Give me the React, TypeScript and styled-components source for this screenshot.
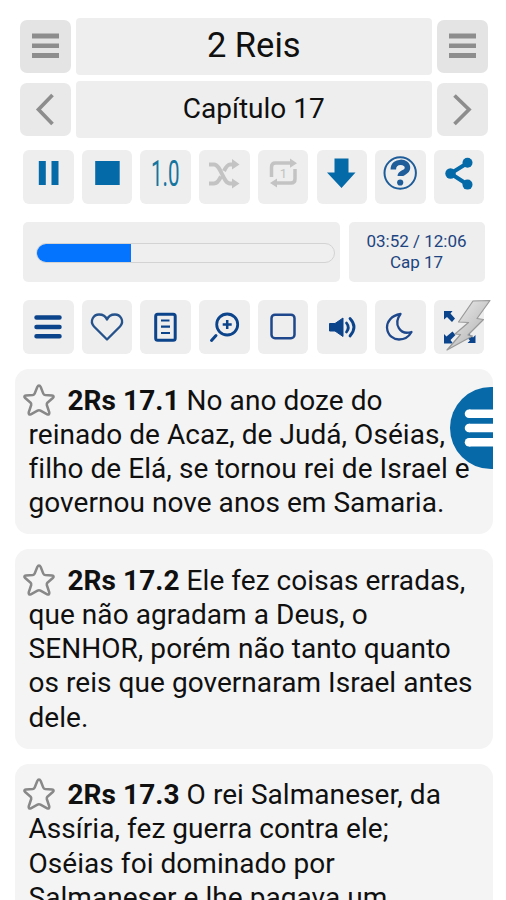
import React from 'react';
import styled, { createGlobalStyle, css } from 'styled-components';

const BLUE = '#056aa8';
const NAVY = '#0c448b';
const GREY = '#8d8d8d';
const FAINT = '#c3c3c3';

const GlobalStyle = createGlobalStyle`
  * { box-sizing: border-box; }
  body { margin: 0; background: #fff; }
`;

const Screen = styled.div`
  position: relative;
  width: 506px;
  height: 900px;
  overflow: hidden;
  background: #fff;
  color: #101010;
  font-family: Roboto, 'Liberation Sans', sans-serif;
`;

const HeaderRow = styled.header<{ $top: number }>`
  display: grid;
  grid-template-columns: 51.5px 356.5px 51.5px;
  column-gap: 4.5px;
  align-items: center;
  height: 57px;
  margin: ${(p) => p.$top}px 0 0 19.5px;
`;

const HeaderButton = styled.button<{ $dark?: boolean }>`
  height: 53px;
  padding: 0;
  border: 0;
  border-radius: 7px;
  background: ${(p) => (p.$dark ? '#e4e4e4' : '#e9e9e9')};
`;

const HeaderTitle = styled.div<{ $size: number; $lift: number }>`
  height: 57px;
  border-radius: 4px;
  background: #eee;
  font-size: ${(p) => p.$size}px;
  line-height: ${(p) => 57 - p.$lift}px;
  text-align: center;
  white-space: nowrap;
`;

const Toolbar = styled.nav<{ $top: number }>`
  display: grid;
  grid-template-columns: repeat(8, 50.5px);
  justify-content: space-between;
  width: 461.5px;
  margin: ${(p) => p.$top}px 0 0 23px;
`;

const ToolButton = styled.button`
  display: block;
  height: 54.5px;
  padding: 0;
  border: 0;
  border-radius: 6px;
  background: #eee;
`;

const Icon = styled.svg`
  display: block;
  overflow: visible;
`;

const Speed = styled.span`
  display: block;
  height: 54px;
  color: #14759f;
  font: 36px/48px Roboto, sans-serif;
  transform: scaleX(0.57);
  white-space: nowrap;
  margin: 0 -10px;
`;

const PlayerRow = styled.div`
  display: flex;
  gap: 9px;
  margin: 18px 0 0 23px;
  height: 60px;
`;

const panel = css`
  border-radius: 5px;
  background: #eee;
`;

const ProgressPanel = styled.div`
  ${panel}
  width: 316.5px;
  padding: 21px 5px 0 13px;
`;

const Track = styled.div`
  height: 20px;
  overflow: hidden;
  border: 1.5px solid #d3d3d3;
  border-radius: 10px;
  background: #efefef;
`;

const Fill = styled.div`
  width: 95px;
  height: 20px;
  margin: -1.5px;
  background: #0474ff;
`;

const TimePanel = styled.div`
  ${panel}
  width: 136px;
  padding-top: 9px;
  color: #1c4480;
  font-size: 17px;
  line-height: 20.5px;
  text-align: center;
`;

const Verses = styled.main`
  display: flex;
  flex-direction: column;
  gap: 15px;
  margin: 15px 0 0 14.5px;
  width: 478px;
`;

const VerseCard = styled.article`
  padding: 14.5px 0 14px 14px;
  border-radius: 14px;
  background: #f4f4f4;
`;

const Line = styled.div<{ $first?: boolean }>`
  display: flex;
  align-items: flex-start;
  height: 34.2px;
  margin-left: ${(p) => (p.$first ? -6 : 0)}px;
  font-size: 28px;
  line-height: 34.2px;
  letter-spacing: 0.05px;
  white-space: pre;
`;

const StarIcon = styled(Icon)`
  flex: none;
  margin-right: 13px;
`;

const FloatingMenu = styled.button`
  position: absolute;
  top: 386.5px;
  left: 450px;
  width: 43px;
  height: 82px;
  padding: 0;
  border: 0;
  border-radius: 41px 0 0 41px;
  background: #0869a8;
`;

const Star = () => (
  <StarIcon width="32" height="34" viewBox="0 0 32 34" fill="none" stroke="#888" strokeWidth="2.5" strokeLinejoin="round">
    <path d="M16 1.5Q17 1.5 17.7 3L20.3 9.6Q20.8 10.8 22.2 11L29 11.5Q31.8 12 29.8 14L24.4 18.7Q23.6 19.6 23.8 21L26.3 28.5Q26.6 31.3 24.2 30.3L17.5 26.6Q16 25.8 14.5 26.6L7.8 30.3Q5.4 31.3 5.7 28.5L8.2 21Q8.4 19.6 7.6 18.7L2.2 14Q.2 12 3 11.5L9.8 11Q11.2 10.8 11.7 9.6L14.3 3Q15 1.5 16 1.5Z" />
  </StarIcon>
);

const Bars = () => (
  <Icon width="52" height="53" viewBox="0 0 52 53" fill={GREY}>
    <path d="M12 13.5h27v5h-27zM12 23.5h27v4.500h-27zM12 33h27v5h-27z" />
  </Icon>
);

const Chevron = ({ right }: { right?: boolean }) => (
  <Icon width="52" height="53" viewBox="0 0 52 53" fill="none" stroke={GREY} strokeWidth="3.700">
    <path d={right ? 'M17.500 12.500L32 26.500L17.500 41' : 'M32.500 12L18.500 26.500L32.500 41'} />
  </Icon>
);

const Tool = ({ children }: { children: React.ReactNode }) => (
  <ToolButton>
    <Icon width="50.5" height="54.5" viewBox="0 0 50.5 54.5" fill="none">{children}</Icon>
  </ToolButton>
);

const verses = [
  { ref: '2Rs 17.1', lines: ['No ano doze do', 'reinado de Acaz, de Judá, Oséias,', 'filho de Elá, se tornou rei de Israel e', 'governou nove anos em Samaria.'] },
  { ref: '2Rs 17.2', lines: ['Ele fez coisas erradas,', 'que não agradam a Deus, o', 'SENHOR, porém não tanto quanto', 'os reis que governaram Israel antes', 'dele.'] },
  { ref: '2Rs 17.3', lines: ['O rei Salmaneser, da', 'Assíria, fez guerra contra ele;', 'Oséias foi dominado por', 'Salmaneser e lhe pagava um'] },
];

export default function App() {
  return (
    <Screen>
      <GlobalStyle />
      <HeaderRow $top={17.5}>
        <HeaderButton $dark><Bars /></HeaderButton>
        <HeaderTitle $size={34.5} $lift={1.5}>2 Reis</HeaderTitle>
        <HeaderButton $dark><Bars /></HeaderButton>
      </HeaderRow>
      <HeaderRow $top={6}>
        <HeaderButton><Chevron /></HeaderButton>
        <HeaderTitle $size={28} $lift={1}>Capítulo 17</HeaderTitle>
        <HeaderButton><Chevron right /></HeaderButton>
      </HeaderRow>

      <Toolbar $top={12}>
        <Tool><path fill={BLUE} d="M15.8 11h7v24h-7zM28.5 11h7v24h-7z" /></Tool>
        <Tool><path fill={BLUE} d="M13.2 11h24.5v24h-24.5z" /></Tool>
        <ToolButton><Speed>1.0</Speed></ToolButton>
        <Tool>
          <g stroke={FAINT} strokeWidth="4">
            <path d="M10 14.5h5c7 0 9 19 16 19h4M10 33.5h5c3 0 5-3 7-7M25 21c2-4 4-6.500 6-6.500h4" />
          </g>
          <path fill={FAINT} d="M33 9l7.500 5.500l-7.500 5zM33 28.500l7.500 5l-7.500 5z" />
        </Tool>
        <Tool>
          <path stroke={FAINT} strokeWidth="3.500" d="M13.500 27V17q0-4 4-4H34M37 19v10q0 4-4 4H17" />
          <path fill={FAINT} d="M32 8.500l7 4.700l-7 4.500zM19 28.500v9l-7-4.500z" />
          <text x="25.300" y="27.500" fill={FAINT} fontSize="13" fontFamily="Roboto" textAnchor="middle">1</text>
        </Tool>
        <Tool><path fill={BLUE} d="M17.500 8.500h14v14h7L24.500 38L10 22.500h7.500z" /></Tool>
        <Tool>
          <circle cx="25.200" cy="23" r="15.700" stroke="#1e5d99" strokeWidth="2" />
          <path stroke="#1e5d99" strokeWidth="5.500" d="M18.300 19.500c0-9.500 14.500-9 14.200-1.500c-.2 5-7.200 4.500-7.200 8" />
          <circle cx="25.200" cy="32.500" r="3.100" fill="#1e5d99" />
        </Tool>
        <Tool>
          <path stroke={BLUE} strokeWidth="4" d="M33.500 13L16.500 23.500L33.500 34.500" />
          <g fill={BLUE}><circle cx="33.500" cy="12.800" r="5" /><circle cx="16.500" cy="23.500" r="5.200" /><circle cx="33.500" cy="34.600" r="5" /></g>
        </Tool>
      </Toolbar>

      <PlayerRow>
        <ProgressPanel><Track><Fill /></Track></ProgressPanel>
        <TimePanel>03:52 / 12:06<br />Cap 17</TimePanel>
      </PlayerRow>

      <Toolbar $top={17.5}>
        <Tool><path stroke={NAVY} strokeWidth="4.500" strokeLinecap="round" d="M13.500 17.500h23M13.500 27h23M13.500 36.300h23" /></Tool>
        <Tool><path stroke="#25528b" strokeWidth="2.300" strokeLinejoin="round" d="M25 39.500L12 26.500C7 20.500 12 14.500 17 14.500C21 14.500 24 17 25 19.500C26 17 29 14.500 33 14.500C38 14.500 43 20.500 38 26.500Z" /></Tool>
        <Tool>
          <rect x="15.700" y="14.200" width="19.500" height="26" rx="2" stroke={NAVY} strokeWidth="3" />
          <path stroke={NAVY} strokeWidth="2.200" d="M21 20.500h8.500M21 26.700h9M21 33h9" />
        </Tool>
        <Tool>
          <circle cx="28.200" cy="24.500" r="10.500" stroke={NAVY} strokeWidth="2.800" />
          <path stroke={NAVY} strokeWidth="3" strokeLinecap="round" d="M12.500 40.500L17 35.500" />
          <path stroke={NAVY} strokeWidth="2.500" d="M28.200 20v9M23.700 24.500h9" />
        </Tool>
        <Tool><rect x="13.500" y="14.700" width="23" height="23.500" rx="3.500" stroke="#1e488b" strokeWidth="2.500" /></Tool>
        <Tool>
          <path fill={NAVY} stroke={NAVY} strokeWidth="1" strokeLinejoin="round" d="M12.500 23.500h5.500l8-5.500v18.500l-8-5.500h-5.500z" />
          <path stroke={NAVY} strokeWidth="2.800" strokeLinecap="round" d="M29.500 23q3.500 4.500 0 9M33 18.500q8 8.500 0 17.500" />
        </Tool>
        <Tool><path stroke="#1e488b" strokeWidth="2.300" strokeLinejoin="round" d="M25.500 14C16 15.500 12 22 12 27.500C12.500 36 19 39.500 24 39.500C30 39.500 34 36.500 36.500 32C25 35.500 18 24 25.500 14Z" /></Tool>
        <Tool>
          <defs>
            <linearGradient id="bolt" x1="0" y1="0" x2="1" y2="1">
              <stop offset="0" stopColor="#f3f3f3" /><stop offset="1" stopColor="#a8a8a8" />
            </linearGradient>
          </defs>
          <path fill={NAVY} d="M10 11h8.500l-2 2.500l4.500 5l-3 3.500l-5-5l-3 2.500zM10 43.500V34l2.500 2.500l6-5l3 3.500l-5 5l2.500 3.500zM41.500 43h-8l2.500-2.500l-3.500-3.500l3-3l3.500 3.500l2.500-2.500z" />
          <path fill="url(#bolt)" stroke="#999" strokeWidth="1.200" strokeLinejoin="round" d="M39 1L56 .5L43 18.500L49.500 19.500L34 35L38.500 36L13 50L26.500 34.500L21 34L34.500 22.500L24.500 22Z" />
        </Tool>
      </Toolbar>

      <Verses>
        {verses.map((verse) => (
          <VerseCard key={verse.ref}>
            {verse.lines.map((line, i) => (
              <Line key={line} $first={i === 0}>
                {i === 0 && <Star />}
                <span>{i === 0 && <b>{verse.ref} </b>}{line}</span>
              </Line>
            ))}
          </VerseCard>
        ))}
      </Verses>

      <FloatingMenu>
        <Icon width="43" height="82" viewBox="0 0 43 82">
          <path stroke="#fff" strokeWidth="8.500" d="M19 26.700h24M19 41h24M19 55.200h24" />
          <g fill="#fff"><circle cx="19" cy="26.700" r="4.250" /><circle cx="19" cy="41" r="4.250" /><circle cx="19" cy="55.200" r="4.250" /></g>
        </Icon>
      </FloatingMenu>
    </Screen>
  );
}
